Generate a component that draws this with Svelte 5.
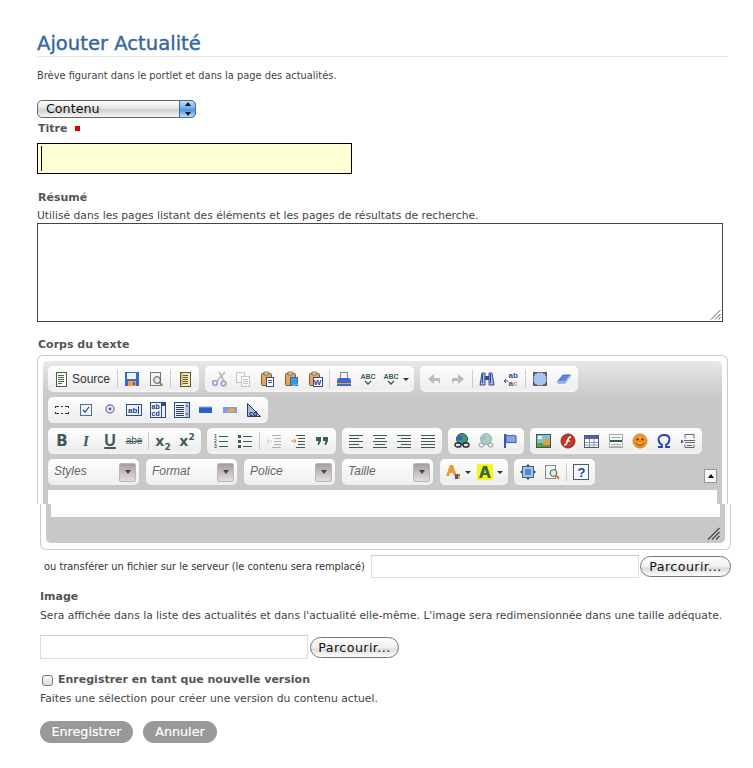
<script>
  const ink = '#3c5a5a';
  const lines = (rows, c = ink, sw = 1) =>
    rows.map(([x1, y, x2]) => `<path d="M${x1} ${y}.5H${x2}" stroke="${c}" stroke-width="${sw}"/>`).join('');
  const t = (s, x, y, size, fill = ink, extra = '') =>
    `<text x="${x}" y="${y}" font-size="${size}" fill="${fill}" font-family="Liberation Sans, sans-serif" ${extra}>${s}</text>`;
  const page = (x, y, w, h, fill = '#fff', st = '#6a7a7a') =>
    `<rect x="${x}.5" y="${y}.5" width="${w}" height="${h}" fill="${fill}" stroke="${st}"/>`;
  const clip = `<rect x="2.5" y="2.5" width="10" height="12" rx="1" fill="#e2a75c" stroke="#8a5a20"/><rect x="5" y="1" width="5" height="3" fill="#c9c2b0" stroke="#6b5a3a" stroke-width=".6"/>`;
  const glass = (x, y) =>
    `<circle cx="${x}" cy="${y}" r="3.4" fill="#d8ecf2" stroke="#555"/><path d="M${x + 2.5} ${y + 2.5}l3 3" stroke="#c9772a" stroke-width="1.8"/>`;
  const ic = {
    doc: page(3, 1, 10, 14, '#fdfbe6', '#4b5b5b') + lines([[5, 4, 11], [5, 6, 11], [5, 8, 11], [5, 10, 11], [5, 12, 9]], '#3c6a5a'),
    save: `<rect x="1" y="1" width="14" height="14" fill="#3a68c8"/><rect x="3" y="2" width="9" height="6" fill="#f2f4fa"/><rect x="4" y="10" width="8" height="5" fill="#f0a030"/><rect x="9" y="11" width="2" height="3" fill="#3a68c8"/>`,
    preview: page(2, 1, 10, 13, '#f2f2ee', '#777') + glass(9, 9),
    templates: page(3, 1, 10, 14, '#f6e9a8', '#5a5a3a') + lines([[6, 4, 11], [6, 6, 11], [6, 8, 11], [6, 10, 11], [6, 12, 11]], '#555') + `<path d="M5 2v12" stroke="#c08a30"/>`,
    cut: `<g opacity=".7"><path d="M14 1L6 10M8 1l5 9" stroke="#9aa0a8" stroke-width="1.6"/><circle cx="4" cy="12" r="2.3" fill="none" stroke="#7a88c8" stroke-width="1.8"/><circle cx="12.500" cy="12.500" r="2.3" fill="none" stroke="#7a88c8" stroke-width="1.8"/></g>`,
    copy: `<g opacity=".38">` + page(1, 1, 8, 10, '#fff', '#778') + page(6, 5, 8, 10, '#fff', '#778') + lines([[8, 8, 13], [8, 10, 13], [8, 12, 13]], '#778') + `</g>`,
    paste: clip + page(7, 6, 7, 9, '#fff', '#3a4a8a') + lines([[9, 9, 13], [9, 11, 13]], '#3a4a8a'),
    pastetext: clip + `<rect x="7.5" y="6.5" width="7" height="8" fill="#3a9ae0" stroke="#2a6aa0"/><path d="M9 15l6-2" stroke="#8cf"/>`,
    pasteword: clip + page(6, 6, 9, 9, '#fff', '#3a4a8a') + t('W', 6.8, 14, 8, '#2a3a8a', 'font-weight="700"'),
    print: `<rect x="4.5" y="1.5" width="7" height="6" fill="#f4f4f4" stroke="#888"/><path d="M2 7h12l1 3v5H1v-5z" fill="#3a6ad0"/><rect x="1" y="12" width="14" height="1" fill="#f0a030"/>`,
    spell: t('ABC', 0.5, 8, 7, ink, 'font-weight="700"') + `<path d="M5 10l3 3 3-3" stroke="${ink}" fill="none" stroke-width="1.4"/>`,
    undo: `<path d="M8 3L2 8l6 5v-3h4l2 3V7H8z" fill="#b8bcbc"/>`,
    redo: `<path d="M8 3l6 5-6 5v-3H4l-2 3V7h6z" fill="#b8bcbc"/>`,
    find: `<path d="M3 2h3v12H1zM10 2h3l2 12h-5z" fill="#a8bcec" stroke="#3a4a90"/><rect x="6" y="5" width="4" height="4" fill="#3a4a90"/><path d="M3.500 3v9M11.500 3v9" stroke="#3a4a90"/>`,
    replace: t('ab', 5.5, 7, 8, '#3a4a8a') + t('a<tspan fill="#d89030">c</tspan>', 5.5, 15, 8, '#3a5a5a') + `<path d="M1 10h4M3 8l-2 2 2 2" stroke="#3a4a8a" fill="none"/>`,
    maximize: `<rect x="1.5" y="1.5" width="13" height="13" fill="#a8c4f0" stroke="#6a7a7a"/><path d="M2 5V2h3M11 2h3v3M2 11v3h3M14 11v3h-3" stroke="#333" fill="none"/>`,
    erase: `<path d="M1 11l6-7h8l-6 8H2z" fill="#5a88e0" stroke="#3a5aa0" stroke-width=".7"/><path d="M1 11h8l6-7" fill="none" stroke="#dce6fa"/>`,
    form: `<path d="M2 4.5h3M7 4.5h2M11 4.5h3M2 11.5h3M7 11.5h2M11 11.5h3M1.5 4v2M1.5 10v2M14.5 4v2M14.5 10v2" stroke="#333" fill="none"/>`,
    checkbox: `<rect x="2.5" y="2.5" width="11" height="11" fill="#eef2fb" stroke="#5a6a9a"/><path d="M5 8l2 2 4-5" stroke="#2a4a7a" fill="none" stroke-width="1.2"/>`,
    radio: `<circle cx="8" cy="7" r="4" fill="#eef" stroke="#7a80b0" stroke-width="1.4"/><circle cx="8" cy="7" r="1.4" fill="#4a5a8a"/>`,
    textfield: `<rect x=".5" y="2.5" width="15" height="11" fill="#eef2fb" stroke="#2a4a8a"/>` + t('ab', 2, 11, 8, '#2a3a7a', 'font-weight="700"') + `<path d="M12.5 4v8" stroke="#2a3a7a"/>`,
    textarea: `<rect x=".5" y=".5" width="15" height="15" fill="#eef2fb" stroke="#2a4a8a"/>` + t('ab', 1.5, 7, 7, '#2a3a7a', 'font-weight="700"') + t('cd', 1.5, 14, 7, '#2a3a7a', 'font-weight="700"') + `<path d="M11.5 1v14" stroke="#2a4a8a"/><rect x="12" y="1" width="3" height="3" fill="#2a4a8a"/>`,
    select: `<rect x=".5" y=".5" width="15" height="15" fill="#eef2fb" stroke="#2a4a8a"/>` + lines([[2, 3, 10], [2, 5, 10], [2, 7, 10], [2, 9, 10], [2, 11, 10], [2, 13, 10]], '#2a3a6a') + `<rect x="11" y="1" width="4" height="14" fill="#b8c6e6"/><path d="M12 4h2M12 12h2" stroke="#223"/>`,
    button: `<rect x="1" y="5" width="13" height="6" fill="#2a62c8"/><path d="M1 5h13" stroke="#8ab0f0"/>`,
    imagebutton: `<rect x="1" y="5" width="14" height="6" fill="#7aa0e0"/><path d="M5 9l3-3h3l3 4H5z" fill="#f0a050"/>`,
    hidden: `<path d="M1.5 1.5l13 13h-13z" fill="#a8bce8" stroke="#2a3a6a"/>` + t('cd', 3, 14, 7, '#12224a', 'font-weight="700"'),
    ol: t('1', 1, 5, 5) + t('2', 1, 10, 5) + t('3', 1, 15, 5) + lines([[6, 3, 15], [6, 8, 15], [6, 13, 15]]),
    ul: `<rect x="1" y="2" width="3" height="3" fill="${ink}"/><rect x="1" y="7" width="3" height="3" fill="${ink}"/><rect x="1" y="12" width="3" height="3" fill="${ink}"/>` + lines([[6, 3, 15], [6, 8, 15], [6, 13, 15]]),
    outdent: `<g opacity=".4">` + lines([[6, 2, 15], [8, 5, 15], [8, 8, 15], [8, 11, 15], [6, 14, 15]]) + `<path d="M6 8H1M3 6L1 8l2 2" stroke="#e08a20" fill="none"/></g>`,
    indent: lines([[6, 2, 15], [8, 5, 15], [8, 8, 15], [8, 11, 15], [6, 14, 15]]) + `<path d="M1 8h5M4 6l2 2-2 2" stroke="#e08a20" fill="none"/>`,
    quote: `<path d="M2 4h5v4l-2 4H3.500l1-4H2zM9 4h5v4l-2 4h-1.500l1-4H9z" fill="${ink}"/>`,
    left: lines([[1, 2, 15], [1, 5, 11], [1, 8, 15], [1, 11, 11], [1, 14, 15]]),
    center: lines([[1, 2, 15], [3, 5, 13], [1, 8, 15], [3, 11, 13], [1, 14, 15]]),
    right: lines([[1, 2, 15], [5, 5, 15], [1, 8, 15], [5, 11, 15], [1, 14, 15]]),
    justify: lines([[1, 2, 15], [1, 5, 15], [1, 8, 15], [1, 11, 15], [1, 14, 15]]),
    link: `<circle cx="8" cy="6" r="5.5" fill="#3a9a6a" stroke="#22506a"/><path d="M4 3h4v4H4z" fill="#2a62c0"/><rect x="1" y="10" width="6" height="4" rx="2" fill="#dde" stroke="#223" stroke-width="1.3"/><rect x="9" y="10" width="6" height="4" rx="2" fill="#dde" stroke="#223" stroke-width="1.3"/>`,
    unlink: `<g opacity=".42"><circle cx="8" cy="6" r="5.5" fill="#3a9a6a" stroke="#22506a"/><path d="M4 3h4v4H4z" fill="#2a62c0"/><rect x="1" y="10" width="5" height="4" rx="2" fill="#dde" stroke="#223"/><rect x="10" y="10" width="5" height="4" rx="2" fill="#dde" stroke="#223"/></g>`,
    anchor: `<path d="M3 1v14" stroke="#3a5aa8" stroke-width="2"/><path d="M4 2c4 2 6-1 10 1v7c-4-2-6 1-10-1z" fill="#8aa4e0" stroke="#3a5aa8"/>`,
    image: `<rect x=".5" y="1.5" width="14" height="13" fill="#7ac0d8" stroke="#3a5a3a"/><rect x="1" y="10" width="13" height="4" fill="#5aa040"/><path d="M7 8l4-3 3 3v4H7z" fill="#e89a40"/><rect x="2" y="3" width="4" height="3" fill="#f4f0c8"/>`,
    flash: `<circle cx="8" cy="8" r="7" fill="#c0392a" stroke="#8a2a20"/><path d="M11 4C8 4 8 6 7.5 8S6 12 4 12" stroke="#fff" fill="none" stroke-width="1.4"/><path d="M6 8h4" stroke="#fff" stroke-width="1.2"/>`,
    table: `<rect x=".5" y="2.5" width="14" height="12" fill="#fff" stroke="#4a5a6a"/><rect x="1" y="3" width="13" height="3" fill="#4a66a8"/><path d="M5.5 6v8M10 6v8M1 9.5h13M1 12h13" stroke="#8a94a8"/>`,
    hr: `<rect x="1.5" y="1.5" width="13" height="13" fill="#f4f4f4" stroke="#aaa"/><rect x="2" y="7" width="12" height="2" fill="#3a5a5a"/>` + lines([[3, 4, 13], [3, 11, 13], [3, 13, 13]], '#aaa'),
    smiley: `<circle cx="8" cy="8" r="7" fill="#f0962a" stroke="#d8801a"/><circle cx="5.5" cy="6.5" r="1.1" fill="#222"/><circle cx="10.5" cy="6.5" r="1.1" fill="#222"/><path d="M4 10c2 3 6 3 8 0" stroke="#8a2a10" fill="#e8c040"/>`,
    omega: `<path d="M2 14h4v-2C3 10 2.5 8.5 2.5 6.5 2.5 3.5 5 2 8 2s5.500 1.500 5.500 4.500c0 2-.5 3.500-3.500 5.500v2h4" fill="none" stroke="#2a3eb0" stroke-width="1.8"/>`,
    pagebreak: `<path d="M5 5.500V1.500h9v4M4 7.500h11M5 9.500h10M5 11.500v3h9v-3M7 12.500h5" stroke="#667" fill="none"/><path d="M1 6.500l3 2-3 2z" fill="#3a5aa8"/>`,
    textcolor: `<path d="M5 1h3l4 11h-3l-1-3H5l-1 3H1z" fill="#e89a3a"/><rect x="10" y="10" width="3" height="2" fill="#e03030"/><rect x="13" y="10" width="2" height="2" fill="#30a030"/><rect x="10" y="12" width="3" height="3" fill="#3050d0"/><rect x="13" y="12" width="2" height="3" fill="#e0c030"/>`,
    bgcolor: `<rect width="16" height="16" fill="#f6f61e"/><path d="M6 2h4l4 12h-3l-1-3H6l-1 3H2z" fill="#3a6a3a"/><path d="M7 9h2L8 5z" fill="#f6f61e"/>`,
    maximize2: `<path d="M8 0l2 2H6zM8 16l2-2H6zM0 8l2-2v4zM16 8l-2-2v4z" fill="#3a5a5a"/><rect x="2.500" y="2.500" width="11" height="11" fill="#a8c4f0" stroke="#3a6a6a"/><rect x="5" y="5" width="6" height="6" fill="#5a80d8"/>`,
    showblocks: page(1, 1, 10, 13, '#f4f4f0', '#888') + glass(9.5, 9),
    about: `<rect x=".5" y=".5" width="15" height="15" fill="#f6f8fc" stroke="#4a5a6a"/>` + t('?', 4.500, 13, 13, '#2a3eb0', 'font-weight="700"')
  };
  const lab = (s, cls = '') => ({ label: s, cls });
  const S = { sep: true };
  const b = (i, arrow = false) => ({ i, arrow });
  const toolbar = [
    [
      [{ i: 'doc', source: true }, S, b('save'), b('preview'), S, b('templates')],
      [b('cut'), b('copy'), b('paste'), b('pastetext'), b('pasteword'), S, b('print'), b('spell'), b('spell', true)],
      [b('undo'), b('redo'), S, b('find'), b('replace'), S, b('maximize'), b('erase')]
    ],
    [[b('form'), b('checkbox'), b('radio'), b('textfield'), b('textarea'), b('select'), b('button'), b('imagebutton'), b('hidden')]],
    [
      [lab('B', 'bold'), lab('I', 'ital'), lab('U', 'under'), lab('abe', 'strike'), S, lab('x2', 'sub'), lab('x2', 'sup')],
      [b('ol'), b('ul'), S, b('outdent'), b('indent'), b('quote')],
      [b('left'), b('center'), b('right'), b('justify')],
      [b('link'), b('unlink'), b('anchor')],
      [b('image'), b('flash'), b('table'), b('hr'), b('smiley'), b('omega'), b('pagebreak')]
    ]
  ];
  const combos = ['Styles', 'Format', 'Police', 'Taille'];
  const lastGroups = [
    [b('textcolor', true), b('bgcolor', true)],
    [b('maximize2'), b('showblocks'), S, b('about')]
  ];
</script>

{#snippet icon(name)}
  <svg class="ico" width="16" height="16" viewBox="0 0 16 16" aria-hidden="true">{@html ic[name]}</svg>
{/snippet}

{#snippet group(items)}
  <div class="group">
    {#each items as it}
      {#if it.sep}
        <span class="sep"></span>
      {:else if it.label}
        <span class="btn {it.cls}">
          <span>{#if it.cls === 'sub'}x<sub>2</sub>{:else if it.cls === 'sup'}x<sup>2</sup>{:else}{it.label}{/if}</span>
        </span>
      {:else if it.source}
        <span class="btn source">{@render icon(it.i)}<span class="srctext">Source</span></span>
      {:else if it.arrow}
        <span class="btn wide">{@render icon(it.i)}<i class="caret"></i></span>
      {:else}
        <span class="btn">{@render icon(it.i)}</span>
      {/if}
    {/each}
  </div>
{/snippet}

<main class="page">
  <h1>Ajouter Actualité</h1>
  <p class="desc">Brève figurant dans le portlet et dans la page des actualités.</p>

  <div class="selectwrap">
    <select class="sel"><option>Contenu</option></select>
    <span class="cap" aria-hidden="true"><i class="up"></i><i class="down"></i></span>
  </div>

  <div class="label titre">Titre <span class="req"></span></div>
  <div class="titlebox"><span class="cursor"></span></div>

  <div class="label resume">Résumé</div>
  <p class="help h-resume">Utilisé dans les pages listant des éléments et les pages de résultats de recherche.</p>
  <div class="area">
    <svg class="grip" width="11" height="11" viewBox="0 0 11 11" aria-hidden="true"><path d="M1 10.500L10.500 1M5 10.500L10.500 5M8.500 10.500l2-2" stroke="#555" fill="none"/></svg>
  </div>

  <div class="label corps">Corps du texte</div>

  <section class="ed-top">
    <div class="grey-top">
      {#each toolbar as row}
        <div class="row">
          {#each row as g}{@render group(g)}{/each}
        </div>
      {/each}
      <div class="row">
        {#each combos as c}
          <div class="combo"><span>{c}</span><b class="drop"><i></i></b></div>
        {/each}
        {#each lastGroups as g}{@render group(g)}{/each}
        <span class="collapse"><i></i></span>
      </div>
      <div class="white-top"></div>
    </div>
  </section>
  <section class="ed-bottom">
    <div class="grey-bottom">
      <div class="white-bottom"></div>
      <svg class="grip2" width="13" height="13" viewBox="0 0 13 13" aria-hidden="true"><path d="M1 12.500L12.500 1M5 12.500L12.500 5M9 12.500l3.500-3.500" stroke="#444" stroke-width="1.1" fill="none"/></svg>
    </div>
  </section>

  <div class="upload">
    <span class="uptext">ou transférer un fichier sur le serveur (le contenu sera remplacé)</span>
    <input class="file" type="text" />
    <button class="browse" type="button">Parcourir...</button>
  </div>

  <div class="label image">Image</div>
  <p class="help h-image">Sera affichée dans la liste des actualités et dans l'actualité elle-même. L'image sera redimensionnée dans une taille adéquate.</p>
  <div class="upload2">
    <input class="file f2" type="text" />
    <button class="browse b2" type="button">Parcourir...</button>
  </div>

  <label class="label checkrow"><input type="checkbox" /> Enregistrer en tant que nouvelle version</label>
  <p class="help h-version">Faites une sélection pour créer une version du contenu actuel.</p>

  <div class="actions">
    <button class="act save" type="button">Enregistrer</button>
    <button class="act cancel" type="button">Annuler</button>
  </div>
</main>

<style>
  :global(body) { margin: 0; background: #fff; }
  .page {
    padding: 30px 0 24px 37px;
    width: 716px;
    font-family: "DejaVu Sans", Verdana, sans-serif;
    font-size: 9.85px;
    color: #444;
  }
  h1 {
    margin: 0;
    width: 691px;
    height: 25px;
    padding-top: 1px;
    line-height: 26px;
    font-size: 19.6px;
    font-weight: 400;
    color: #35689f;
    border-bottom: 1px solid #e6e6e6;
    -webkit-text-stroke: .4px #35689f;
    white-space: nowrap;
  }
  p { margin: 0; }
  .desc { margin-top: 12px; line-height: 14px; }
  .selectwrap { position: relative; width: 159px; height: 18px; margin-top: 17px; }
  .sel {
    appearance: none;
    display: block;
    width: 159px;
    height: 18px;
    padding: 0 0 0 8px;
    border: 1px solid #666;
    border-radius: 5px;
    font: 12.7px/16px "DejaVu Sans", sans-serif;
    color: #111;
    background: linear-gradient(#fff, #e4e4e4 45%, #cfcfcf 55%, #f6f6f6);
  }
  .cap {
    position: absolute;
    right: 0;
    top: 0;
    width: 17px;
    height: 18px;
    box-sizing: border-box;
    border: 1px solid #4a6a9a;
    border-radius: 0 5px 5px 0;
    background: linear-gradient(#c4dcf8, #6aa6ec 50%, #4a8ee6 55%, #b8e0fa);
  }
  .cap i { position: absolute; left: 5px; width: 0; height: 0; border: 3px solid transparent; }
  .up { top: -2px; border-bottom: 4px solid #111 !important; }
  .down { bottom: -2px; border-top: 4px solid #111 !important; }
  .label {
    display: block;
    font-size: 11px;
    line-height: 14px;
    font-weight: 700;
    color: #555;
    white-space: nowrap;
  }
  .titre { margin-top: 4px; padding-left: 1px; }
  .req { display: inline-block; width: 5px; height: 5px; margin: 0 0 1px 4px; background: #e00000; vertical-align: middle; }
  .titlebox {
    box-sizing: border-box;
    width: 315px;
    height: 31px;
    margin-top: 7px;
    padding: 2px 0 0 3px;
    border: 1px solid #000;
    background: #ffffd6;
  }
  .cursor { display: block; width: 1px; height: 25px; background: #000; }
  .resume { margin-top: 17px; padding-left: 1px; margin-bottom: -1px; }
  .help { line-height: 14px; white-space: nowrap; font-size: 10.72px; }
  .h-resume { margin-top: 5px; }
  .area {
    position: relative;
    box-sizing: border-box;
    width: 686px;
    height: 99px;
    margin-top: 0;
    border: 1px solid #444;
    background: #fff;
  }
  .grip { position: absolute; right: 1px; bottom: 1px; }
  .corps { margin-top: 16px; padding-left: 1px; margin-bottom: -1px; }
  .ed-top {
    box-sizing: border-box;
    width: 691px;
    height: 149px;
    margin-top: 4px;
    padding: 5px 5px 0;
    border: 1px solid #ccc;
    border-bottom: 0;
    border-radius: 6px 6px 0 0;
  }
  .grey-top {
    position: relative;
    height: 143px;
    box-sizing: border-box;
    padding: 5px 5px 0;
    display: flex;
    flex-direction: column;
    gap: 5px;
    border-radius: 5px 5px 0 0;
    background: linear-gradient(#e8e8e8, #c8c8c8 36px);
  }
  .row { display: flex; gap: 6px; height: 26px; flex: none; }
  .group {
    display: flex;
    align-items: center;
    height: 26px;
    padding: 0 2px;
    border-radius: 5px;
    background: linear-gradient(#fff, #eee 85%, #f4f4f4);
  }
  .btn {
    display: flex;
    align-items: center;
    justify-content: center;
    width: 24px;
    height: 24px;
    flex: none;
    font: 700 13px/24px "Liberation Sans", sans-serif;
    color: #3c5a5a;
  }
  .source { width: 65px; justify-content: flex-start; padding-left: 3px; box-sizing: border-box; }
  .srctext { margin-left: 3px; font: 400 12px "Liberation Sans", sans-serif; color: #333; }
  .wide { width: 32px; justify-content: flex-start; padding-left: 3px; box-sizing: border-box; }
  .caret { width: 0; height: 0; margin-left: 4px; border: 3px solid transparent; border-top: 3px solid #333; border-bottom: 0; }
  .sep { flex: none; width: 1px; height: 18px; margin: 0 2px; background: #ccc; }
  .bold { font-size: 15px; font-family: "DejaVu Sans", sans-serif; font-weight: 700; }
  .ital { font-size: 15px; font-style: italic; font-family: "Liberation Serif", serif; }
  .under { font-size: 16px; text-decoration: underline; text-decoration-thickness: 2px; }
  .strike { font-size: 10px; font-weight: 400; text-decoration: line-through; }
  .sub, .sup { font-size: 14px; font-family: "DejaVu Sans", sans-serif; }
  .btn sub, .btn sup { font-size: 9px; line-height: 0; }
  .combo {
    box-sizing: border-box;
    display: flex;
    align-items: center;
    justify-content: space-between;
    flex: none;
    width: 91px;
    height: 26px;
    padding: 0 3px 0 6px;
    margin-right: 1px;
    border-radius: 5px;
    background: linear-gradient(#fff, #eee);
    font: italic 12px "Liberation Sans", sans-serif;
    color: #666;
  }
  .combo span { margin-top: -2px; }
  .drop {
    display: flex;
    align-items: center;
    justify-content: center;
    width: 17px;
    height: 19px;
    border-radius: 2px;
    border: 1px solid #bdb6b6;
    box-sizing: border-box;
    background: linear-gradient(#a89e9e, #e2dede);
  }
  .drop i { width: 0; height: 0; border: 3px solid transparent; border-top: 4px solid #444; border-bottom: 0; }
  .collapse {
    position: absolute;
    right: 5px;
    top: 108px;
    box-sizing: border-box;
    display: flex;
    align-items: center;
    justify-content: center;
    width: 13px;
    height: 14px;
    border: 1px solid #999;
    background: #f6f6f6;
  }
  .collapse i { width: 0; height: 0; border: 3px solid transparent; border-bottom: 4px solid #111; border-top: 0; }
  .white-top { height: 14px; background: #fff; margin-right: 0; flex: none; }
  .ed-bottom {
    box-sizing: border-box;
    width: 691px;
    height: 46px;
    margin-left: 3px;
    padding: 0 5px;
    border: 1px solid #ccc;
    border-top: 0;
    border-radius: 0 0 6px 6px;
  }
  .grey-bottom {
    position: relative;
    box-sizing: border-box;
    height: 39px;
    padding: 0 5px;
    border-radius: 0 0 5px 5px;
    background: #c8c8c8;
  }
  .white-bottom { height: 13px; background: #fff; }
  .grip2 { position: absolute; right: 5px; bottom: 3px; }
  .upload { display: flex; align-items: center; height: 23px; margin-top: 5px; }
  .uptext { width: 334px; padding-left: 7px; box-sizing: border-box; white-space: nowrap; color: #333; }
  .file {
    box-sizing: border-box;
    width: 268px;
    height: 23px;
    padding: 0;
    border: 1px solid #ddd;
    border-top-color: #ccc;
    background: #fff;
  }
  .browse {
    box-sizing: border-box;
    width: 91px;
    height: 21px;
    margin-left: 1px;
    padding: 0;
    border: 1px solid #777;
    border-radius: 11px;
    background: linear-gradient(#fff, #f0f0f0 50%, #dcdcdc 60%, #fff);
    font: 12.7px "DejaVu Sans", sans-serif;
    letter-spacing: .4px;
    color: #111;
  }
  .image { margin-top: 12px; padding-left: 3px; margin-bottom: -1px; }
  .h-image { margin-top: 6px; padding-left: 3px; }
  .upload2 { display: flex; align-items: center; height: 24px; margin: 12px 0 0 3px; }
  .f2 { height: 24px; }
  .b2 { width: 89px; margin-left: 2px; }
  .checkrow { display: flex; align-items: center; margin: 14px 0 0 5px; }
  .checkrow input {
    appearance: none;
    box-sizing: border-box;
    width: 11px;
    height: 11px;
    margin: 0 5px 0 0;
    border: 1px solid #777;
    border-radius: 3px;
    background: linear-gradient(#f8f8f8, #ddd);
  }
  .h-version { margin-top: 5px; padding-left: 3px; font-size: 10.8px; }
  .actions { display: flex; gap: 10px; margin: 15px 0 0 3px; }
  .act {
    height: 22px;
    padding: 0 0 2px;
    border: 0;
    border-radius: 11px;
    background: #999;
    color: #fff;
    font: 400 12.7px "DejaVu Sans", sans-serif;
    -webkit-text-stroke: .2px #fff;
  }
  .save { width: 93px; }
  .cancel { width: 74px; }
</style>
